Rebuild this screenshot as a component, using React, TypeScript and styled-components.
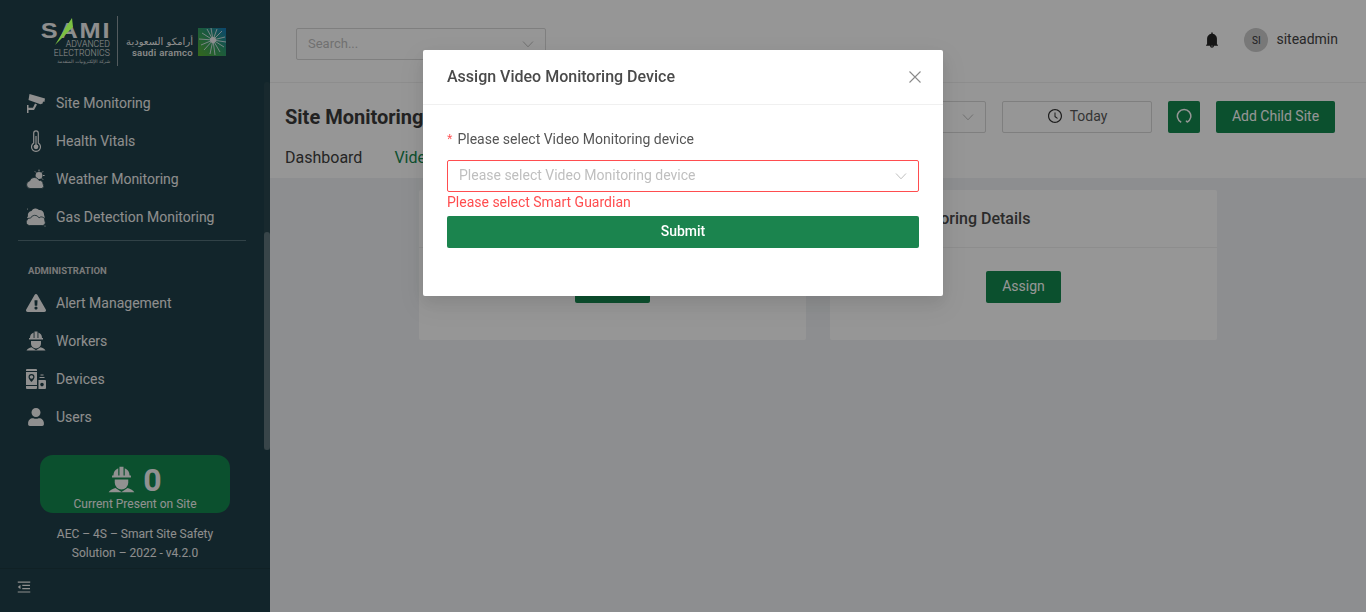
import React from "react";
import styled, { createGlobalStyle } from "styled-components";
import { AiFillBell, AiOutlineClockCircle, AiOutlineMenuFold } from "react-icons/ai";
import { FaExclamationTriangle, FaUser } from "react-icons/fa";

const Global = createGlobalStyle`
  html, body { margin: 0; padding: 0; height: 100%; overflow: hidden; }
  body { font-family: Roboto, "Liberation Sans", sans-serif; font-size: 14px; color: #262626; background: #f0f2f5; }
  * { box-sizing: border-box; }
`;

const Page = styled.div`display: flex; width: 100%; height: 612px; overflow: hidden;`;

const Sidebar = styled.aside`
  width: 270px; flex: none; display: flex; flex-direction: column;
  background: #204049; color: #f3f3f3;
`;
const LogoBar = styled.div`
  height: 82px; display: flex; align-items: center; padding: 0 0 0 41px;
`;
const SamiBlock = styled.div`
  position: relative; width: 69px; display: flex; flex-direction: column; align-items: flex-end;
  padding-top: 5px; color: #f0f0f0;
`;
const SamiWord = styled.div`
  font-family: "Liberation Sans", sans-serif; font-weight: 700; font-size: 22px; line-height: 18px;
  letter-spacing: 1.6px; margin-right: -1px; color: #f2f2f2; transform: scaleX(1.15); transform-origin: right center;
`;
const SamiSpike = styled.svg`position: absolute; left: 14px; top: 1px; z-index: 1;`;
const SamiSub = styled.div`font-size: 8.6px; font-weight: 300; line-height: 9px; white-space: nowrap; letter-spacing: .1px;`;
const SamiArabic = styled.div`font-family: "DejaVu Sans", sans-serif; font-size: 4.6px; line-height: 7px; white-space: nowrap; opacity: .85;`;
const LogoRule = styled.div`width: 1px; height: 50px; background: #8d9ba0; margin: 0 7px;`;
const AramcoWords = styled.div`display: flex; flex-direction: column; align-items: flex-end; width: 68px; padding-top: 10px;`;
const AramcoArabic = styled.div`font-family: "DejaVu Sans", sans-serif; font-size: 10px; line-height: 13px; white-space: nowrap; color: #f0f0f0;`;
const AramcoLatin = styled.div`font-size: 9.5px; font-weight: 500; line-height: 10px; letter-spacing: .3px; white-space: nowrap; color: #f0f0f0;`;
const AramcoMark = styled.svg`margin-left: 5px; margin-top: 1px; flex: none;`;

const NavArea = styled.nav`position: relative; height: 368px; padding-top: 2px;`;
const ScrollTrack = styled.div`position: absolute; top: 0; right: 0; bottom: 0; width: 6px; background: #29474f; border-radius: 3px 3px 0 0;`;
const ScrollThumb = styled.div`position: absolute; top: 150px; right: 0; width: 6px; height: 218px; border-radius: 3px; background: #5f767c;`;
const NavItem = styled.div`
  height: 38px; display: flex; align-items: center; gap: 10px; padding-left: 26px;
  font-size: 14px; line-height: 22px; color: #f1f1f1; font-weight: 400;
`;
const NavIcon = styled.span`width: 20px; height: 20px; flex: none; display: flex; align-items: center; justify-content: center; color: #f4f4f4;`;
const Rule = styled.div`height: 1px; margin: 4px 24px 0 18px; background: #54707a;`;
const GroupLabel = styled.div`height: 43px; padding: 22px 0 0 28px; font-size: 9.5px; line-height: 16px; font-weight: 700; color: #cfcfcf;`;

const StatCard = styled.div`
  width: 190px; height: 58px; margin: 5px 0 0 40px; border-radius: 13px; background: #14884f;
  display: flex; flex-direction: column; align-items: center; color: #f6f6f6;
`;
const StatTop = styled.div`display: flex; align-items: center; gap: 8px; height: 41px; padding-top: 8px;`;
const StatCount = styled.span`font-size: 32px; font-weight: 700; line-height: 34px;`;
const StatCaption = styled.div`font-size: 12px; line-height: 16px;`;
const Version = styled.div`
  margin-top: 12px; text-align: center; font-size: 12px; line-height: 19px; color: #f1f1f1; height: 43px;
`;
const Collapse = styled.div`
  flex: 1; border-top: 1px solid #1c3840; display: flex; align-items: center; padding: 0 0 8px 16px; color: #f2f2f2; font-size: 16px;
`;

const Main = styled.main`flex: 1; min-width: 0; display: flex; flex-direction: column; background: #f0f2f5;`;
const TopBar = styled.header`
  height: 83px; flex: none; display: flex; align-items: center; padding: 0 28px 2px 26px; background: #fff;
  border-bottom: 1px solid #f0f0f0;
`;
const SearchBox = styled.div`
  width: 250px; height: 32px; margin-top: 8px; border: 1px solid #d9d9d9; border-radius: 2px; padding: 0 11px;
  display: flex; align-items: center; justify-content: space-between; color: #bfbfbf; font-size: 13px;
`;
const Chevron = styled.svg`flex: none; color: #bfbfbf;`;
const TopRight = styled.div`margin-left: auto; display: flex; align-items: center; color: #262626;`;
const BellWrap = styled.span`display: flex; font-size: 18px; margin-right: 23px;`;
const Avatar = styled.span`
  width: 24px; height: 24px; border-radius: 50%; background: #ccc; color: #333; font-size: 10px;
  display: flex; align-items: center; justify-content: center; margin-right: 8px;
`;
const UserName = styled.span`font-size: 14px; line-height: 22px; margin-top: -3px; color: #444;`;

const PageHead = styled.section`background: #fff; height: 95px; flex: none; padding: 18px 31px 0 15px;`;
const TitleRow = styled.div`display: flex; align-items: center; height: 32px;`;
const Title = styled.h1`margin: 0; font-size: 20px; line-height: 28px; font-weight: 700; color: #3a3a3a;`;
const Controls = styled.div`margin-left: auto; display: flex; gap: 16px;`;
const Field = styled.div<{ $w: number }>`
  width: ${p => p.$w}px; height: 32px; border: 1px solid #d9d9d9; border-radius: 2px; color: #595959;
  display: flex; align-items: center; justify-content: flex-end; gap: 8px; padding: 0 11px; font-size: 14px;
`;
const TodayField = styled(Field)`justify-content: center; gap: 7px; padding-bottom: 2px;`;
const ClockWrap = styled.span`display: flex; font-size: 16px; color: #333;`;
const GreenBtn = styled.button<{ $w: number }>`
  width: ${p => p.$w}px; height: 32px; border: 0; border-radius: 2px; background: #14884f; color: #fff; padding: 0 0 2px;
  font: 400 14px/22px Roboto, sans-serif; display: flex; align-items: center; justify-content: center;
`;
const Tabs = styled.div`display: flex; gap: 32px; margin-top: 13px; font-size: 16px; line-height: 24px; color: #404040;`;
const ActiveTab = styled.span`color: #14884f;`;

const Content = styled.section`flex: 1; display: flex; justify-content: center; gap: 24px; padding-top: 12px;`;
const Card = styled.article`width: 387px; height: 150px; background: #fff; border-radius: 2px;`;
const CardHead = styled.div`height: 58px; padding: 0 24px; border-bottom: 1px solid #f0f0f0; display: flex; align-items: center; font-size: 16px; font-weight: 500; color: #4a4a4a;`;
const CardBody = styled.div`display: flex; justify-content: center; padding-top: 23px;`;

const Mask = styled.div`
  position: fixed; inset: 0; background: rgba(0,0,0,.41); display: flex; justify-content: center; align-items: flex-start; padding-top: 50px;
`;
const Modal = styled.div`
  width: 520px; height: 246px; background: #fff; border-radius: 2px;
  box-shadow: 0 6px 16px rgba(0,0,0,.08), 0 9px 28px 8px rgba(0,0,0,.05);
`;
const ModalHead = styled.div`
  height: 55px; padding: 0 22px 0 24px; display: flex; align-items: center; justify-content: space-between; border-bottom: 1px solid #f0f0f0;
`;
const ModalTitle = styled.div`font-size: 16px; font-weight: 500; line-height: 22px; color: #4a4a4a;`;
const CloseIcon = styled.svg`color: #8a8a8a; flex: none;`;
const ModalBody = styled.div`padding: 23px 24px 0;`;
const Label = styled.div`font-size: 14px; line-height: 22px; color: #555;`;
const Required = styled.span`color: #ff4d4f; margin-right: 5px; font-family: "Liberation Sans", sans-serif; font-size: 14px;`;
const ErrorSelect = styled.div`
  height: 32px; margin-top: 10px; border: 1px solid #ff4d4f; border-radius: 2px; padding: 0 11px;
  display: flex; align-items: center; justify-content: space-between; color: #bfbfbf; font-size: 14px;
`;
const Placeholder = styled.span`margin-top: -2px;`;
const ErrorText = styled.div`font-size: 14px; line-height: 20px; height: 24px; color: #ff4d4f;`;
const Submit = styled.button`
  width: 100%; height: 32px; border: 0; border-radius: 2px; background: #1b844e; color: #fff;
  font: 500 14px/22px Roboto, sans-serif; padding: 0 0 2px;
`;

const Down = () => (
  <Chevron width="12" height="12" viewBox="0 0 12 12" fill="none" stroke="currentColor" strokeWidth="1">
    <path d="M1 3.5 L6 8.8 L11 3.5" />
  </Chevron>
);

const Cctv = () => (
  <svg width="20" height="20" viewBox="0 0 20 20" fill="currentColor">
    <path d="M3.5 1 L19 5.5 L18.4 9 L17 8.6 L16.6 10.4 L14.4 11.3 L2.5 7 Z" />
    <path d="M1 12 H2.5 V14.7 L7 14.7 L9 10.6 L11 11.4 L8 17 L2.5 17 V20 H1 Z" />
  </svg>
);
const Thermo = () => (
  <svg width="20" height="22" viewBox="0 0 20 22" fill="none" stroke="currentColor" strokeWidth="1.2">
    <path d="M7.7 13 V3.2 a2.3 2.3 0 0 1 4.6 0 V13 a4.5 4.5 0 1 1 -4.6 0 Z" />
    <circle cx="10" cy="16.8" r="2.4" fill="currentColor" stroke="none" />
    <rect x="9.4" y="6" width="1.2" height="9" fill="currentColor" stroke="none" />
  </svg>
);
const Weather = () => (
  <svg width="20" height="20" viewBox="0 0 20 20" fill="currentColor">
    <circle cx="13" cy="6.5" r="3.4" />
    <path d="M13 0.6v1.8M18.6 6.5h-1.6M17 2.4l-1.2 1.2M8.9 2.4l1.1 1.1M17 10.6l-1.2-1.2" stroke="currentColor" strokeWidth="1" />
    <path d="M4 19.5 a3.8 3.8 0 0 1 -.4 -7.5 a5 5 0 0 1 9.4 -0.6 a3.3 3.3 0 0 1 4 3.3 a3.4 3.4 0 0 1 -.9 4.8 Z" stroke="#204049" strokeWidth=".8" />
  </svg>
);
const Gas = () => (
  <svg width="20" height="20" viewBox="0 0 20 20" fill="currentColor">
    <path d="M2 9 a4 4 0 0 1 3.5 -5 a4.5 4.5 0 0 1 7.5 -1 a4.5 4.5 0 0 1 5 5 a4 4 0 0 1 .5 3 H1 Z" />
    <path d="M3.5 18.5 a3.3 3.3 0 0 1 -2.5 -5.4 a3 3 0 0 1 3.6 -2 a4.6 4.6 0 0 1 8.4 -.2 a3.4 3.4 0 0 1 5.8 3 a3 3 0 0 1 -2 4.6 Z" stroke="#204049" strokeWidth=".8" />
    <circle cx="19" cy="19" r=".6" /><circle cx="1.5" cy="2" r=".5" />
  </svg>
);
const Worker = ({ size = 20 }: { size?: number }) => (
  <svg width={size} height={size} viewBox="0 0 20 20" fill="currentColor">
    <path d="M4 7 a6 6 0 0 1 3.6 -5.4 V7 h.9 V0.5 h3 V7 h.9 V1.6 A6 6 0 0 1 16 7 h1 v1.6 H3 V7 Z" />
    <path d="M5 10 h10 v2.4 a5 5 0 0 1 -10 0 Z" />
    <path d="M0.5 19.5 c.5 -1.5 3 -2.5 5 -3.2 l4.5 3 4.5 -3 c2 .7 4.5 1.7 5 3.2 Z" />
  </svg>
);
const Devices = () => (
  <svg width="20" height="20" viewBox="0 0 20 20" fill="currentColor" fillRule="evenodd">
    <path d="M1 0 h9 a1 1 0 0 1 1 1 v1 H0 V1 a1 1 0 0 1 1 -1 Z" />
    <path d="M0 3 H11 V16 H0 Z M5.5 5 a3 3 0 0 0 -3 3 c0 2 3 5 3 5 s3 -3 3 -5 a3 3 0 0 0 -3 -3 Z M5.5 6.2 a1.8 1.8 0 1 1 0 3.6 a1.8 1.8 0 0 1 0 -3.6 Z" />
    <path d="M0 17 H11 V19 a1 1 0 0 1 -1 1 H1 a1 1 0 0 1 -1 -1 Z" />
    <path d="M12.5 11 h6.5 a1 1 0 0 1 1 1 v7 a1 1 0 0 1 -1 1 h-6.5 Z M16 13.8 a1.8 1.8 0 1 0 0 3.6 a1.8 1.8 0 0 0 0 -3.6 Z" />
    <path d="M13.5 8 h5 v1 h-5 Z M14.5 5.5 h3 v1 h-3 Z" />
  </svg>
);

const rays = [
  [9, 1], [13, 0], [19, 1], [24, 3], [27, 9], [28, 14], [26, 19], [22, 24], [17, 27], [12, 26], [6, 22], [3, 17], [1, 11], [4, 5],
];

const items1: [string, React.ReactNode][] = [
  ["Site Monitoring", <Cctv />],
  ["Health Vitals", <Thermo />],
  ["Weather Monitoring", <Weather />],
  ["Gas Detection Monitoring", <Gas />],
];
const items2: [string, React.ReactNode][] = [
  ["Alert Management", <FaExclamationTriangle size={20} />],
  ["Workers", <Worker />],
  ["Devices", <Devices />],
  ["Users", <FaUser size={18} />],
];

export default function App() {
  return (
    <Page>
      <Global />
      <Sidebar>
        <LogoBar>
          <SamiBlock>
            <SamiSpike width="20" height="27" viewBox="0 0 20 27"><path d="M17 0 L18 9 L0 27 L11 9 Z" fill="#7cc142" /></SamiSpike>
            <SamiWord>SAMI</SamiWord>
            <SamiSub>ADVANCED</SamiSub>
            <SamiSub>ELECTRONICS</SamiSub>
            <SamiArabic>شركة الإلكترونيات المتقدمة</SamiArabic>
          </SamiBlock>
          <LogoRule />
          <AramcoWords>
            <AramcoArabic>أرامكو السعودية</AramcoArabic>
            <AramcoLatin>saudi aramco</AramcoLatin>
          </AramcoWords>
          <AramcoMark width="28" height="28" viewBox="0 0 28 28">
            <defs>
              <linearGradient id="ar" x1="0" y1="1" x2="1" y2="0">
                <stop offset="0" stopColor="#5ab031" />
                <stop offset=".55" stopColor="#2e9a6a" />
                <stop offset="1" stopColor="#1479bd" />
              </linearGradient>
            </defs>
            <rect width="28" height="28" fill="url(#ar)" />
            {rays.map(([x, y]) => (
              <path key={`${x}-${y}`} d={`M15 12 L${x} ${y}`} stroke="#dfe9ee" strokeWidth=".9" />
            ))}
            <circle cx="15" cy="12" r="3" fill="#f1f4f5" />
          </AramcoMark>
        </LogoBar>
        <NavArea>
          {items1.map(([t, i]) => <NavItem key={t}><NavIcon>{i}</NavIcon>{t}</NavItem>)}
          <Rule />
          <GroupLabel>ADMINISTRATION</GroupLabel>
          {items2.map(([t, i]) => <NavItem key={t}><NavIcon>{i}</NavIcon>{t}</NavItem>)}
          <ScrollTrack />
          <ScrollThumb />
        </NavArea>
        <StatCard>
          <StatTop>
            <Worker size={27} />
            <StatCount>0</StatCount>
          </StatTop>
          <StatCaption>Current Present on Site</StatCaption>
        </StatCard>
        <Version>AEC – 4S – Smart Site Safety<br />Solution – 2022 - v4.2.0</Version>
        <Collapse><AiOutlineMenuFold /></Collapse>
      </Sidebar>
      <Main>
        <TopBar>
          <SearchBox><Placeholder>Search...</Placeholder><Down /></SearchBox>
          <TopRight>
            <BellWrap><AiFillBell /></BellWrap>
            <Avatar>SI</Avatar>
            <UserName>siteadmin</UserName>
          </TopRight>
        </TopBar>
        <PageHead>
          <TitleRow>
            <Title>Site Monitoring</Title>
            <Controls>
              <Field $w={200}><Down /></Field>
              <TodayField $w={150}><ClockWrap><AiOutlineClockCircle /></ClockWrap>Today</TodayField>
              <GreenBtn $w={32} aria-label="Refresh">
                <svg width="16" height="16" viewBox="0 0 16 16" fill="none" stroke="currentColor" strokeWidth="1.5">
                  <path d="M5.2 14.2 A6.7 6.7 0 1 1 11 14.2" />
                  <path d="M11 14.2 L10.2 12.6" />
                </svg>
              </GreenBtn>
              <GreenBtn $w={119}>Add Child Site</GreenBtn>
            </Controls>
          </TitleRow>
          <Tabs>
            <span>Dashboard</span>
            <ActiveTab>Video Monitoring</ActiveTab>
          </Tabs>
        </PageHead>
        <Content>
          <Card>
            <CardHead>Smart Guardian Details</CardHead>
            <CardBody><GreenBtn $w={75}>Assign</GreenBtn></CardBody>
          </Card>
          <Card>
            <CardHead>Video Monitoring Details</CardHead>
            <CardBody><GreenBtn $w={75}>Assign</GreenBtn></CardBody>
          </Card>
        </Content>
      </Main>
      <Mask>
        <Modal>
          <ModalHead>
            <ModalTitle>Assign Video Monitoring Device</ModalTitle>
            <CloseIcon width="12" height="12" viewBox="0 0 12 12" fill="none" stroke="currentColor" strokeWidth="1.1">
              <path d="M.5 .5 L11.5 11.5 M11.5 .5 L.5 11.5" />
            </CloseIcon>
          </ModalHead>
          <ModalBody>
            <Label><Required>*</Required>Please select Video Monitoring device</Label>
            <ErrorSelect><Placeholder>Please select Video Monitoring device</Placeholder><Down /></ErrorSelect>
            <ErrorText>Please select Smart Guardian</ErrorText>
            <Submit>Submit</Submit>
          </ModalBody>
        </Modal>
      </Mask>
    </Page>
  );
}
